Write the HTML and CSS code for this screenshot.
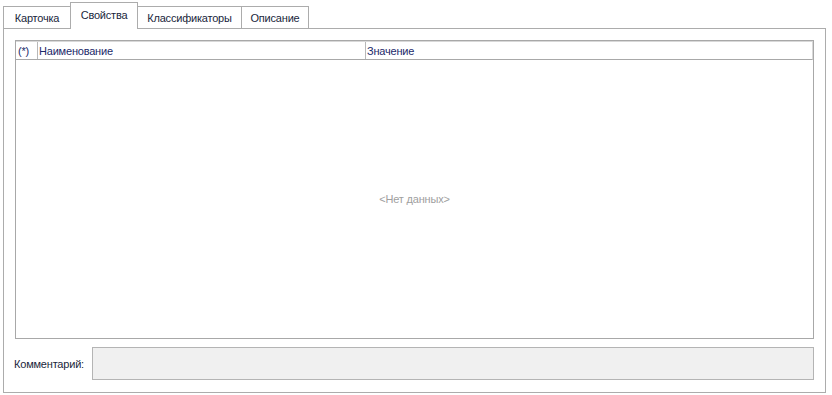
FILE: index.html
```html
<!DOCTYPE html>
<html lang="ru">
  <head>
    <meta charset="UTF-8" />
    <title>Свойства</title>
    <link rel="stylesheet" href="styles.css">
  </head>
  <body>
    <div class="tabs">
      <div class="tab tab-card">Карточка</div>
      <div class="tab tab-props active">Свойства</div>
      <div class="tab tab-class">Классификаторы</div>
      <div class="tab tab-desc">Описание</div>
    </div>

    <div class="panel">
      <div class="grid">
        <div class="grid-head">
          <div class="cell cell-mark">(*)</div>
          <div class="cell cell-name">Наименование</div>
          <div class="cell cell-value">Значение</div>
        </div>
        <div class="grid-body">&lt;Нет данных&gt;</div>
      </div>

      <div class="comment-row">
        <label class="comment-label">Комментарий:</label>
        <div class="comment-box"></div>
      </div>
    </div>
  </body>
</html>
```

FILE: styles.css
```css
html,
body {
  margin: 0;
  padding: 0;
}
body {
  width: 832px;
  height: 395px;
  background: #fff;
  font-family: "Liberation Sans", Arial, sans-serif;
  font-size: 11px;
  letter-spacing: -0.2px;
  color: #1b2350;
  overflow: hidden;
}
.tabs {
  display: flex;
  align-items: flex-end;
  height: 28px;
  padding-left: 3px;
  box-sizing: border-box;
}
.tab {
  box-sizing: border-box;
  height: 22px;
  border: 1px solid #acacac;
  border-bottom: none;
  margin-left: -1px;
  background: #fff;
  display: flex;
  align-items: center;
  justify-content: center;
  padding-top: 1px;
  color: #1a1f3c;
}
.tab:first-child {
  margin-left: 0;
}
.tab-card {
  width: 68px;
}
.tab-props {
  width: 68px;
}
.tab-class {
  width: 105px;
}
.tab-desc {
  width: 68px;
}
.tab.active {
  height: 27px;
  margin-bottom: -1px;
  position: relative;
  z-index: 1;
  padding-top: 0;
  padding-bottom: 2px;
}
.panel {
  box-sizing: border-box;
  width: 823px;
  height: 365px;
  margin-left: 3px;
  border: 1px solid #acacac;
  padding: 11px;
  display: flex;
  flex-direction: column;
}
.grid {
  flex: 1;
  border: 1px solid #a8a8a8;
  display: flex;
  flex-direction: column;
}
.grid-head {
  display: flex;
  height: 19px;
  box-sizing: border-box;
  border-top: 1px solid #d8d8d8;
  border-right: 1px solid #d8d8d8;
  border-bottom: 1px solid #a8a8a8;
  color: #1c2a6a;
}
.cell {
  box-sizing: border-box;
  display: flex;
  align-items: center;
  padding-left: 2px;
  border-right: 1px solid #b8b8b8;
  white-space: nowrap;
}
.cell-mark {
  width: 22px;
}
.cell-name {
  width: 328px;
  padding-left: 1px;
}
.cell-value {
  flex: 1;
  border-right: none;
  padding-left: 1px;
}
.grid-body {
  flex: 1;
  display: flex;
  align-items: center;
  justify-content: center;
  color: #a0a0a0;
  padding-bottom: 1px;
}
.comment-row {
  display: flex;
  align-items: center;
  height: 33px;
  margin-top: 8px;
  margin-bottom: 1px;
}
.comment-label {
  width: 78px;
  margin-left: -1px;
  color: #1a1f3c;
}
.comment-box {
  flex: 1;
  height: 33px;
  box-sizing: border-box;
  background: #f0f0f0;
  border: 1px solid #b4b4b4;
}
```
